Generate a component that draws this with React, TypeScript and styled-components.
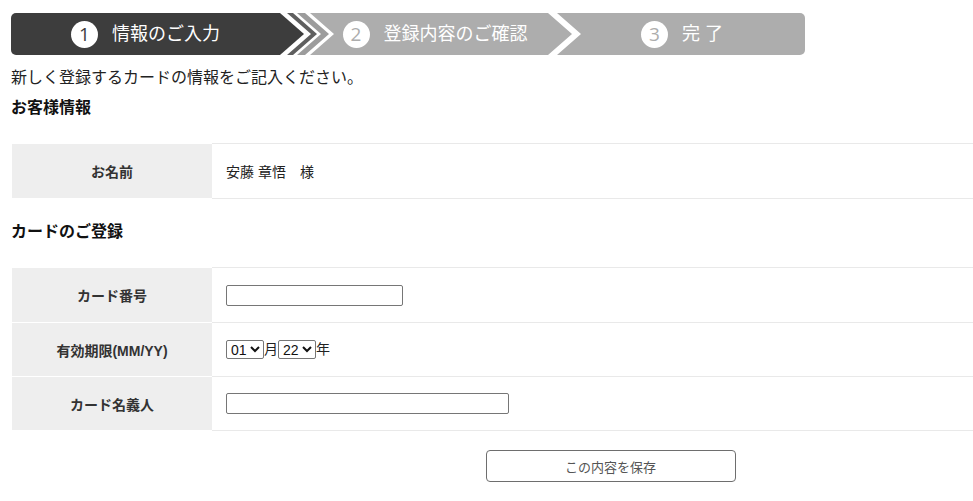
import styled, {createGlobalStyle} from "styled-components";
import {FC, ReactNode} from "react";

const GlobalStyle = createGlobalStyle`
    html, body {
        margin: 0;
        padding: 0;
        background: #fff;
    }
    body {
        font-family: "Liberation Sans", "Noto Sans CJK JP", sans-serif;
        color: #222;
    }
`

const TIP = 24

type Shape = "first" | "mid" | "last"

const shapes: Record<Shape, string> = {
    first: `polygon(0 0, calc(100% - ${TIP}px) 0, 100% 50%, calc(100% - ${TIP}px) 100%, 0 100%)`,
    mid: `polygon(0 0, calc(100% - ${TIP}px) 0, 100% 50%, calc(100% - ${TIP}px) 100%, 0 100%, ${TIP}px 50%)`,
    last: `polygon(0 0, 100% 0, 100% 100%, 0 100%, ${TIP}px 50%)`,
}

const Step: FC<{ n: number, label: string, shape: Shape, active?: boolean, width: number, shift: number, pad: [number, number] }> =
    ({n, label, shape, active, width, shift, pad}) => (
        <StepBox $shape={shape} $active={!!active} $width={width} $shift={shift} $pad={pad}>
            <StepNum $active={!!active}>{n}</StepNum>
            <StepLabel>{label}</StepLabel>
        </StepBox>
    )

const Row: FC<{ label: string, h?: number, children: ReactNode }> = ({label, h = 54, children}) => (
    <tr>
        <Th $h={h}>{label}</Th>
        <Td $h={h}>{children}</Td>
    </tr>
)

const months = ["01", "02", "03", "04", "05", "06", "07", "08", "09", "10", "11", "12"]
const years = ["22", "23", "24", "25", "26", "27", "28", "29", "30", "31", "32"]

export default function App() {
    return (
        <>
            <GlobalStyle/>
            <Page>
                <StepBar>
                    <Step n={1} label="情報のご入力" shape="first" active width={293} shift={0} pad={[0, TIP]}/>
                    <Chevron $tone="#5f5f5f" $top={6} $shift={-17}/>
                    <Chevron $tone="#9c9c9c" $top={8} $shift={-20}/>
                    <Step n={2} label="登録内容のご確認" shape="mid" width={262} shift={-19} pad={[TIP, 36]}/>
                    <Step n={3} label="完 了" shape="last" width={248} shift={-15} pad={[TIP, 22]}/>
                </StepBar>

                <Lead>新しく登録するカードの情報をご記入ください。</Lead>

                <SectionTitle>お客様情報</SectionTitle>
                <FormTable>
                    <tbody>
                    <Row label="お名前">安藤 章悟　様</Row>
                    </tbody>
                </FormTable>

                <SectionTitle $gap={21}>カードのご登録</SectionTitle>
                <FormTable>
                    <tbody>
                    <Row label="カード番号">
                        <TextInput type="text" $width={177}/>
                    </Row>
                    <Row label="有効期限(MM/YY)" h={53}>
                        <DateLine>
                            <Select defaultValue="01">
                                {months.map(m => <option key={m} value={m}>{m}</option>)}
                            </Select>
                            月
                            <Select defaultValue="22">
                                {years.map(y => <option key={y} value={y}>{y}</option>)}
                            </Select>
                            年
                        </DateLine>
                    </Row>
                    <Row label="カード名義人" h={53}>
                        <TextInput type="text" $width={283}/>
                    </Row>
                    </tbody>
                </FormTable>

                <Actions>
                    <SaveButton type="button">この内容を保存</SaveButton>
                </Actions>
            </Page>
        </>
    )
}

const Page = styled.div`
    width: 962px;
    margin-left: 11px;
`

const StepBar = styled.div`
    display: flex;
    height: 42px;
    margin-top: 13px;
`

const StepBox = styled.div<{ $shape: Shape, $active: boolean, $width: number, $shift: number, $pad: [number, number] }>`
    display: flex;
    align-items: center;
    justify-content: center;
    gap: 14px;
    flex: none;
    box-sizing: border-box;
    width: ${p => p.$width}px;
    margin-left: ${p => p.$shift}px;
    padding: 0 ${p => p.$pad[1]}px 0 ${p => p.$pad[0]}px;
    background: ${p => p.$active ? "#3d3d3d" : "#adadad"};
    clip-path: ${p => shapes[p.$shape]};
    border-radius: ${p => p.$shape === "first" ? "5px 0 0 5px" : p.$shape === "last" ? "0 5px 5px 0" : "0"};
    color: #fff;
`

const StepNum = styled.span<{ $active: boolean }>`
    display: flex;
    align-items: center;
    justify-content: center;
    width: 27px;
    height: 27px;
    border-radius: 50%;
    background: #fff;
    color: ${p => p.$active ? "#3d3d3d" : "#adadad"};
    font-family: "Open Sans", "Liberation Sans", sans-serif;
    font-size: 19px;
    font-weight: 500;
    line-height: 1;
`

const StepLabel = styled.span`
    font-size: 18px;
    line-height: 24px;
    white-space: pre;
`

const Chevron = styled.div<{ $tone: string, $top: number, $shift: number }>`
    flex: none;
    width: ${p => p.$top + TIP}px;
    margin-left: ${p => p.$shift}px;
    background: ${p => p.$tone};
    clip-path: polygon(0 0, ${p => p.$top}px 0, 100% 50%, ${p => p.$top}px 100%, 0 100%, ${TIP}px 50%);
`

const Lead = styled.p`
    margin: 11px 0 0;
    font-size: 16px;
    line-height: 24px;
    color: #222;
`

const SectionTitle = styled.h2<{ $gap?: number }>`
    margin: ${p => p.$gap ?? 6}px 0 23px;
    font-size: 16px;
    line-height: 24px;
    font-weight: bold;
    color: #111;
`

const FormTable = styled.table`
    width: 100%;
    border-collapse: separate;
    border-spacing: 0;
    font-size: 14px;
`

const Th = styled.th<{ $h: number }>`
    width: 200px;
    height: ${p => p.$h}px;
    padding: 0;
    background: #eeeeee;
    border-top: 1px solid #fff;
    border-left: 1px solid #fff;
    color: #333;
    font-weight: bold;
    text-align: center;
    vertical-align: middle;

    tr:last-child & {
        border-bottom: 1px solid #fff;
    }
`

const Td = styled.td<{ $h: number }>`
    height: ${p => p.$h}px;
    padding: 0 0 0 14px;
    border-top: 1px solid #e9e9e9;
    color: #222;
    vertical-align: middle;

    tr:last-child & {
        border-bottom: 1px solid #e9e9e9;
    }
`

const TextInput = styled.input<{ $width: number }>`
    display: block;
    box-sizing: border-box;
    width: ${p => p.$width}px;
    height: 21px;
    margin: 0;
    padding: 1px 2px;
    border: 1px solid #767676;
    border-radius: 2px;
    font-size: 13px;
`

const DateLine = styled.div`
    display: flex;
    align-items: center;
    font-size: 14px;
    line-height: 19px;
    color: #222;
`

const Select = styled.select`
    box-sizing: border-box;
    height: 19px;
    margin: 0;
    padding: 0;
    border: 1px solid #767676;
    border-radius: 2px;
    font-family: "Liberation Sans", sans-serif;
    font-size: 14px;
    color: #111;
    background: #fff;
`

const Actions = styled.div`
    display: flex;
    justify-content: center;
    margin-top: 19px;
    padding-left: 237px;
`

const SaveButton = styled.button`
    width: 250px;
    height: 32px;
    background: #fff;
    border: 1px solid #6e6e6e;
    border-radius: 4px;
    color: #555;
    font-family: "Liberation Sans", "Noto Sans CJK JP", sans-serif;
    font-size: 13px;
    cursor: pointer;
`
